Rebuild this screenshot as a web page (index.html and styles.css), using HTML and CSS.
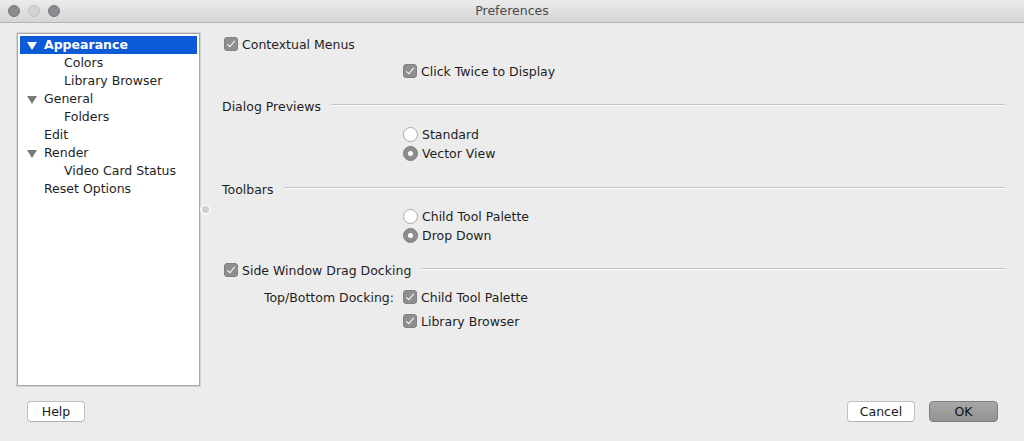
FILE: index.html
```html
<!DOCTYPE html>
<html>
<head>
<meta charset="utf-8">
<link rel="stylesheet" href="styles.css">
</head>
<body>
<div class="window">
  <div class="titlebar">
    <div class="lights">
      <span class="light dark"></span>
      <span class="light pale"></span>
      <span class="light dark"></span>
    </div>
    <div class="title">Preferences</div>
  </div>
  <div class="main">
    <div class="sidebar">
      <div class="item sel"><span class="tri white"></span>Appearance</div>
      <div class="item sub">Colors</div>
      <div class="item sub">Library Browser</div>
      <div class="item"><span class="tri"></span>General</div>
      <div class="item sub">Folders</div>
      <div class="item">Edit</div>
      <div class="item"><span class="tri"></span>Render</div>
      <div class="item sub">Video Card Status</div>
      <div class="item">Reset Options</div>
    </div>
    <div class="splitter"><span class="knob"></span></div>
    <div class="panel">
      <div class="row r1"><span class="cb"></span><span class="lbl">Contextual Menus</span></div>
      <div class="row r2 indent"><span class="cb"></span><span class="lbl">Click Twice to Display</span></div>
      <div class="section s1"><span class="stitle">Dialog Previews</span><span class="rule"></span></div>
      <div class="row r3 indent"><span class="rb"></span><span class="lbl2">Standard</span></div>
      <div class="row r4 indent"><span class="rb on"></span><span class="lbl2">Vector View</span></div>
      <div class="section s2"><span class="stitle">Toolbars</span><span class="rule"></span></div>
      <div class="row r3b indent"><span class="rb"></span><span class="lbl2">Child Tool Palette</span></div>
      <div class="row r4 indent"><span class="rb on"></span><span class="lbl2">Drop Down</span></div>
      <div class="section s3"><span class="cb first"></span><span class="stitle cbt">Side Window Drag Docking</span><span class="rule"></span></div>
      <div class="row r5"><span class="sidelbl">Top/Bottom Docking:</span><span class="cb"></span><span class="lbl">Child Tool Palette</span></div>
      <div class="row r6 indent"><span class="cb"></span><span class="lbl">Library Browser</span></div>
    </div>
  </div>
  <div class="footer">
    <button class="btn help">Help</button>
    <div class="spacer"></div>
    <button class="btn cancel">Cancel</button>
    <button class="btn ok">OK</button>
  </div>
</div>
</body>
</html>
```

FILE: styles.css
```css
* { box-sizing: border-box; }
html, body { margin: 0; padding: 0; }
body {
  width: 1024px;
  height: 441px;
  background: #ececec;
  font-family: "DejaVu Sans", "Lucida Grande", sans-serif;
  font-size: 12.5px;
  color: #1e1e1e;
  overflow: hidden;
}
.window {
  width: 1024px;
  height: 441px;
  display: flex;
  flex-direction: column;
  background: #ececec;
}
.titlebar {
  height: 23px;
  flex: none;
  background: linear-gradient(#ebebeb, #d5d5d5);
  border-bottom: 1px solid #b4b4b4;
  position: relative;
  display: flex;
  align-items: center;
}
.lights {
  display: flex;
  gap: 8px;
  padding-left: 8px;
}
.light {
  width: 12px;
  height: 12px;
  border-radius: 50%;
  display: block;
}
.light.dark { background: #8b8a8f; border: 1px solid #77767b; }
.light.pale { background: #d3d3d3; border: 1px solid #c2c2c2; }
.title {
  position: absolute;
  left: 0; right: 0; top: 0;
  line-height: 22px;
  text-align: center;
  color: #4a4a4a;
  font-size: 12.5px;
}
.main {
  display: flex;
  padding-top: 10px;
  height: 352px;
  flex: none;
}
.sidebar {
  margin-left: 17px;
  width: 183px;
  height: 353px;
  background: #fff;
  border: 1px solid #a8a8a8;
  box-shadow: 0 0 0 1px #d4d4d4;
  padding: 2px 2px;
}
.item {
  height: 18px;
  line-height: 18px;
  padding-left: 24px;
  position: relative;
  white-space: nowrap;
}
.item.sub { padding-left: 44px; }
.item.sel {
  background: #0d5ad7;
  color: #fff;
  font-weight: bold;
}
.tri {
  position: absolute;
  left: 7px;
  top: 6px;
  width: 0; height: 0;
  border-left: 5px solid transparent;
  border-right: 5px solid transparent;
  border-top: 8px solid #7a7a7a;
}
.tri.white { border-top-color: #fff; }
.splitter {
  width: 22px;
  height: 353px;
  display: flex;
  align-items: center;
  justify-content: flex-start;
}
.knob {
  display: block;
  width: 7px;
  height: 7px;
  margin-left: 2px;
  border-radius: 50%;
  background: #d0d0d0;
  box-shadow: 0 0 0 2px #f6f6f6;
}
.panel {
  flex: 1;
  padding-right: 19px;
  padding-top: 2px;
}
.row {
  display: flex;
  align-items: center;
  height: 18px;
  white-space: nowrap;
}
.indent { padding-left: 181px; }
.r1 { margin-top: 0; padding-left: 2px; }
.r2 { margin-top: 9px; }
.r3 { margin-top: 10px; }
.r3b { margin-top: 9px; }
.r4 { margin-top: 1px; }
.r5 { margin-top: 9px; }
.r6 { margin-top: 6px; }
.section {
  display: flex;
  align-items: center;
  height: 18px;
  margin-top: 17px;
}
.s2 { margin-top: 18px; }
.s3 { padding-left: 2px; }
.stitle { white-space: nowrap; }
.rule {
  flex: 1;
  margin-left: 10px;
  height: 2px;
  border-top: 1px solid #c4c4c4;
  border-bottom: 1px solid #f8f8f8;
  margin-top: -2px;
}
.cb {
  width: 14px;
  height: 14px;
  border-radius: 3px;
  background: #8f8f8f;
  border: 1px solid #808080;
  margin-right: 4px;
  position: relative;
  flex: none;
}
.cb::after {
  content: "";
  position: absolute;
  left: 4px;
  top: 1px;
  width: 3px;
  height: 7px;
  border-right: 1.5px solid #fff;
  border-bottom: 1.5px solid #fff;
  transform: rotate(40deg);
}
.rb {
  width: 15px;
  height: 15px;
  border-radius: 50%;
  background: #fff;
  border: 1px solid #a9a9a9;
  margin-right: 4px;
  position: relative;
  flex: none;
}
.rb.on {
  background: #8d8d8d;
  border-color: #7f7f7f;
}
.rb.on::after {
  content: "";
  position: absolute;
  left: 4px; top: 4px;
  width: 5px; height: 5px;
  border-radius: 50%;
  background: #fff;
}
.sidelbl {
  width: 181px;
  text-align: right;
  padding-right: 9px;
}
.footer {
  display: flex;
  align-items: center;
  padding: 0 26px 0 27px;
  margin-top: 26px;
}
.spacer { flex: 1; }
.btn {
  font-family: inherit;
  font-size: 12.5px;
  height: 21px;
  border-radius: 4px;
  padding: 0;
  color: #1a1a1a;
}
.help, .cancel {
  background: #fff;
  border: 1px solid #c0c0c0;
  border-bottom-color: #b0b0b0;
}
.help { width: 58px; }
.cancel { width: 68px; margin-right: 14px; }
.ok {
  width: 69px;
  background: linear-gradient(#a8a8a8, #929292);
  border: 1px solid #7e7e7e;
  color: #111;
}
```
